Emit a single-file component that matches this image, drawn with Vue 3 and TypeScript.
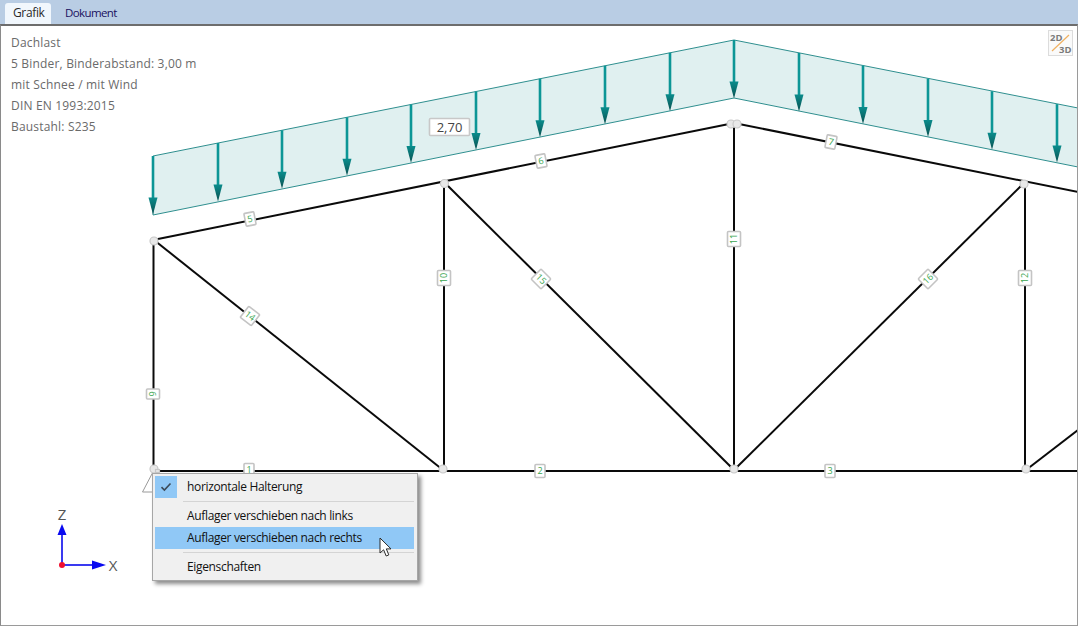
<script setup lang="ts">
const slope = 0.1997
const topAt = (x: number) => (x <= 734 ? 40 + (734 - x) * slope : 40 + (x - 734) * 0.1985)
const xs = [153, 218, 282, 347, 411, 476, 540, 605, 670, 734, 799, 863, 928, 992, 1057]
const arrows = xs.map((x) => ({ x, top: topAt(x), tip: topAt(x) + 58.5 }))

const members = [
  [153, 240, 734, 123],
  [734, 123, 1078, 192],
  [153, 471, 1078, 471],
  [153.5, 240, 153.5, 471],
  [444, 182, 444, 471],
  [734, 123, 734, 471],
  [1025, 181, 1025, 471],
  [154, 240, 443, 470],
  [444, 182, 734, 470],
  [734, 470, 1025, 182],
  [1026, 470, 1078, 430],
]
const nodes = [
  [154, 241], [444.5, 183.5], [731, 124], [737, 124], [1024, 184],
  [154, 469], [443, 469], [734, 469], [1026, 469],
]
const labels = [
  { t: '1', x: 249, y: 470, a: 0, w: 10, h: 13 },
  { t: '2', x: 540, y: 471, a: 0, w: 10, h: 13 },
  { t: '3', x: 830, y: 471, a: 0, w: 10, h: 13 },
  { t: '5', x: 250, y: 219, a: -11, w: 10, h: 13 },
  { t: '6', x: 541, y: 161, a: -11, w: 10, h: 13 },
  { t: '7', x: 831, y: 142, a: 11, w: 10, h: 13 },
  { t: '9', x: 153, y: 394, a: -90, w: 10, h: 13 },
  { t: '10', x: 444, y: 278, a: -90, w: 15, h: 13 },
  { t: '11', x: 734, y: 239, a: -90, w: 15, h: 13 },
  { t: '12', x: 1025, y: 278, a: -90, w: 15, h: 13 },
  { t: '14', x: 250, y: 316, a: 38, w: 14, h: 14 },
  { t: '15', x: 541, y: 279, a: 45, w: 14, h: 14 },
  { t: '16', x: 928, y: 279, a: -45, w: 14, h: 14 },
]
const info = ['Dachlast', '5 Binder, Binderabstand: 3,00 m', 'mit Schnee / mit Wind', 'DIN EN 1993:2015', 'Baustahl: S235']
</script>

<template>
  <div class="app">
    <div class="tabs">
      <div class="tab active">Grafik</div>
      <div class="tab narrow">Dokument</div>
    </div>
    <div class="canvas">
      <svg class="scene" width="1076" height="600" viewBox="1 26 1076 600">
        <defs>
          <linearGradient id="head" x1="0" y1="0" x2="0" y2="1">
            <stop offset="0" stop-color="#0a8c8c" />
            <stop offset="1" stop-color="#0a5050" />
          </linearGradient>
        </defs>
        <polygon class="load" points="153,156 734,40 1078,108 1078,167 734,98 153,215" />
        <g v-for="a in arrows" :key="a.x">
          <line class="shaft" :x1="a.x" :y1="a.top" :x2="a.x" :y2="a.tip - 14" />
          <polygon fill="url(#head)" :points="`${a.x - 4.5},${a.tip - 17} ${a.x + 4.5},${a.tip - 17} ${a.x},${a.tip}`" />
        </g>
        <g class="value">
          <rect x="429.5" y="118.5" width="40" height="17" rx="1" />
          <text x="449.5" y="131.5">2,70</text>
        </g>
        <polyline class="support" points="154,470 142.5,492 153,492" />
        <line v-for="(m, i) in members" :key="i" class="member" :x1="m[0]" :y1="m[1]" :x2="m[2]" :y2="m[3]" />
        <circle v-for="(n, i) in nodes" :key="i" class="node" :cx="n[0]" :cy="n[1]" r="4" />
        <rect class="node" x="155.5" y="469.5" width="4" height="3" />
        <g v-for="l in labels" :key="l.t" :transform="`translate(${l.x} ${l.y}) rotate(${l.a})`" class="tag">
          <rect :x="-l.w / 2" :y="-l.h / 2" :width="l.w" :height="l.h" rx="1" />
          <text y="3">{{ l.t }}</text>
        </g>
        <g class="axes">
          <line class="axis" x1="62" y1="565" x2="62" y2="532" />
          <line class="axis" x1="62" y1="565" x2="94" y2="565" />
          <polygon class="tip" points="62,524 57.5,535 66.5,535" />
          <polygon class="tip" points="106,565 92,560.5 92,569.5" />
          <circle class="origin" cx="62" cy="565" r="3" />
          <text x="62" y="520">Z</text>
          <text x="113" y="571">X</text>
        </g>
        <g class="switch">
          <rect x="1048.5" y="30.5" width="24" height="25" />
          <line x1="1052" y1="51" x2="1069" y2="35" />
          <text x="1050" y="41">2D</text>
          <text x="1059" y="52.5">3D</text>
        </g>
      </svg>
      <div class="info">
        <div v-for="line in info" :key="line" class="info-line">{{ line }}</div>
      </div>
      <div class="menu">
        <div class="row">
          <span class="check">
            <svg width="12" height="10" viewBox="0 0 12 10"><path d="M1.5 5.2 4.4 8 10.5 1.5" fill="none" stroke="#3c4a58" stroke-width="1.6" /></svg>
          </span>
          <span class="label">horizontale Halterung</span>
        </div>
        <div class="sep"></div>
        <div class="row"><span class="gutter"></span><span class="label">Auflager verschieben nach links</span></div>
        <div class="row hot"><span class="gutter"></span><span class="label">Auflager verschieben nach rechts</span></div>
        <div class="sep"></div>
        <div class="row"><span class="gutter"></span><span class="label">Eigenschaften</span></div>
      </div>
      <svg class="cursor" width="14" height="21" viewBox="0 0 14 21">
        <path d="M1 1V16L4.6 12.8 7.2 19 9.8 17.9 7.3 11.9H12Z" fill="#fff" stroke="#2a2a2a" stroke-width="1" />
      </svg>
    </div>
  </div>
</template>

<style scoped>
.app {
  height: 627px;
  width: 1078px;
  display: flex;
  flex-direction: column;
  overflow: hidden;
  background: #fff;
  font-family: "Open Sans", "Noto Sans", sans-serif;
}
.tabs {
  height: 24px;
  flex: none;
  background: #b9cde4;
  display: flex;
  align-items: flex-end;
  padding-left: 5px;
  gap: 6px;
  font-size: 12px;
}
.tab {
  height: 21px;
  line-height: 20px;
  padding: 0 8px;
  color: #1a1060;
  letter-spacing: -0.35px;
}
.narrow {
  font-size: 11.5px;
  letter-spacing: -0.6px;
}
.active {
  width: 46px;
  box-sizing: border-box;
  background: #f1f7fd;
  border-radius: 3px 3px 0 0;
  color: #2a2a2a;
}
.canvas {
  position: relative;
  flex: none;
  height: 602px;
  box-sizing: border-box;
  border-top: 2px solid #6d6d6d;
  border-left: 1px solid #8a8a8a;
  border-right: 1px solid #9a9a9a;
  border-bottom: 1px solid #9a9a9a;
  overflow: hidden;
}
.scene {
  position: absolute;
  left: 0;
  top: 0;
  display: block;
}
.info {
  position: relative;
  padding: 6px 0 0 10px;
  color: #6a6a6a;
  font-size: 12px;
  line-height: 21px;
  letter-spacing: 0.18px;
}
.load {
  fill: #e0f0f0;
  stroke: #2f8f8f;
  stroke-width: 1;
}
.shaft {
  stroke: #0c9696;
  stroke-width: 2.6;
}
.member {
  stroke: #0a0a0a;
  stroke-width: 2;
}
.support {
  fill: none;
  stroke: #9a9a9a;
  stroke-width: 1;
}
.node {
  fill: #e8e8e8;
  stroke: #c8c8c8;
  stroke-width: 1.2;
}
.tag rect {
  fill: #fff;
  stroke: #c4c4c4;
  stroke-width: 1.6;
}
.tag text {
  fill: #3aa64f;
  font-size: 9px;
  text-anchor: middle;
}
.value rect {
  fill: #fff;
  stroke: #c8c8c8;
  stroke-width: 1.6;
}
.value text {
  fill: #444;
  font-size: 13px;
  text-anchor: middle;
}
.axis {
  stroke: #3a3af0;
  stroke-width: 2;
}
.tip {
  fill: #0a0af0;
}
.origin {
  fill: #f01030;
}
.axes text {
  font-size: 15px;
  fill: #555;
  text-anchor: middle;
}
.switch rect {
  fill: #fafafa;
  stroke: #dcdcdc;
}
.switch line {
  stroke: #f0b060;
  stroke-width: 1.2;
}
.switch text {
  font-size: 9.5px;
  font-weight: 700;
  fill: #7a7a7a;
}
.menu {
  position: absolute;
  left: 151px;
  top: 447px;
  width: 266px;
  box-sizing: border-box;
  padding: 2px 3px 2px 2px;
  background: #f0f0f0;
  border: 1px solid #a6a6a6;
  box-shadow: 3px 3px 4px rgba(0, 0, 0, 0.45);
  font-size: 12px;
  color: #111;
  letter-spacing: -0.34px;
}
.row {
  height: 22px;
  box-sizing: border-box;
  display: flex;
  align-items: center;
}
.label {
  margin-bottom: 2px;
}
.hot {
  background: #90c8f6;
}
.gutter {
  width: 32px;
  flex: none;
}
.check {
  width: 22px;
  height: 22px;
  margin-right: 10px;
  flex: none;
  background: #90c8f6;
  display: flex;
  align-items: center;
  justify-content: center;
}
.sep {
  height: 1px;
  margin: 3px 0 3px 28px;
  background: #d4d4d4;
}
.cursor {
  position: absolute;
  left: 378px;
  top: 511px;
}
</style>
